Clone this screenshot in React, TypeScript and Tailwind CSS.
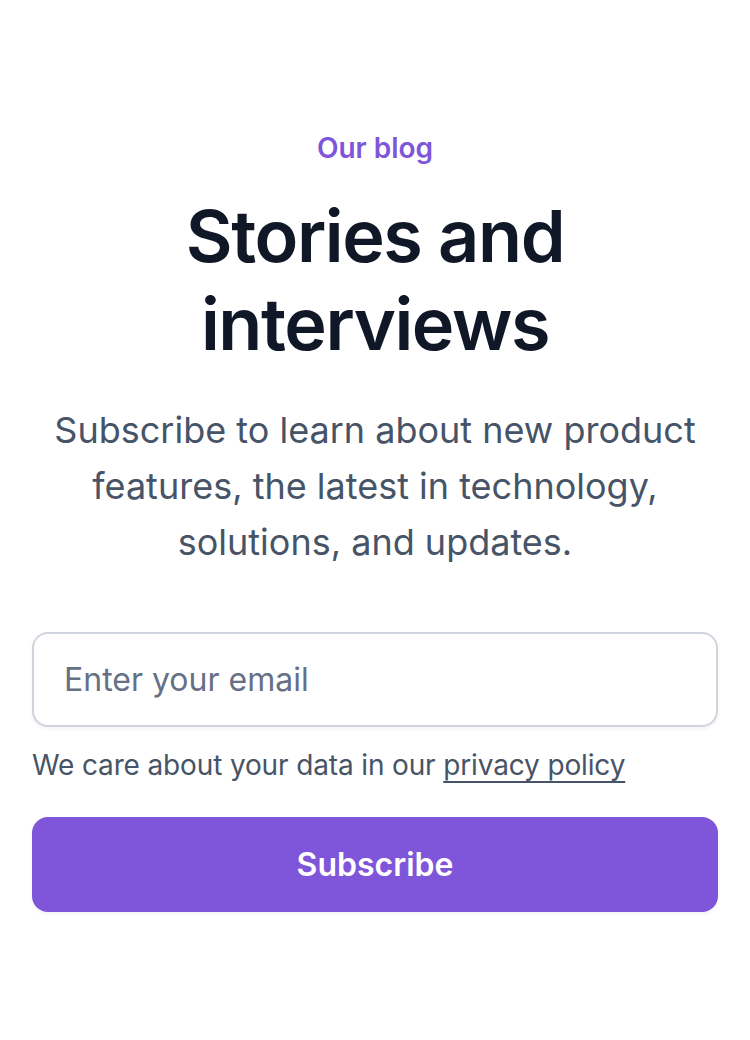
import React from "react";

const App: React.FC = () => {
  return (
    <div
      className="min-h-screen w-full bg-white px-8 pt-[128px] pb-16"
      style={{ fontFamily: "Inter, 'Noto Sans', sans-serif" }}
    >
      <div className="flex flex-col items-center text-center">
        <p className="text-[28px] leading-[40px] font-semibold text-[#7F56D9]">Our blog</p>
        <h1 className="mt-6 text-[72px] leading-[88px] font-semibold tracking-[-0.02em] text-[#101828]">
          Stories and
          <br />
          interviews
        </h1>
        <p className="mt-[34px] text-[36px] leading-[56px] text-[#475467]">
          Subscribe to learn about new product features, the latest in technology, solutions, and updates.
        </p>
      </div>
      <form className="mt-[62px] flex flex-col" onSubmit={(e) => e.preventDefault()}>
        <input
          type="email"
          placeholder="Enter your email"
          className="h-[95px] w-full rounded-2xl border-2 border-[#D0D5DD] bg-white px-[30px] text-[32px] text-[#101828] placeholder:text-[#667085] shadow-[0_2px_4px_rgba(16,24,40,0.05)] outline-none"
        />
        <p className="mt-[18px] text-[28px] leading-[40px] tracking-[-0.005em] text-[#475467]">
          We care about your data in our{" "}
          <a href="#" className="underline underline-offset-[6px] decoration-2">
            privacy policy
          </a>
        </p>
        <button
          type="submit"
          className="mt-8 h-[95px] w-full rounded-2xl bg-[#7F56D9] text-[32px] font-semibold text-white shadow-[0_2px_4px_rgba(16,24,40,0.05)]"
        >
          Subscribe
        </button>
      </form>
    </div>
  );
};

export default App;
